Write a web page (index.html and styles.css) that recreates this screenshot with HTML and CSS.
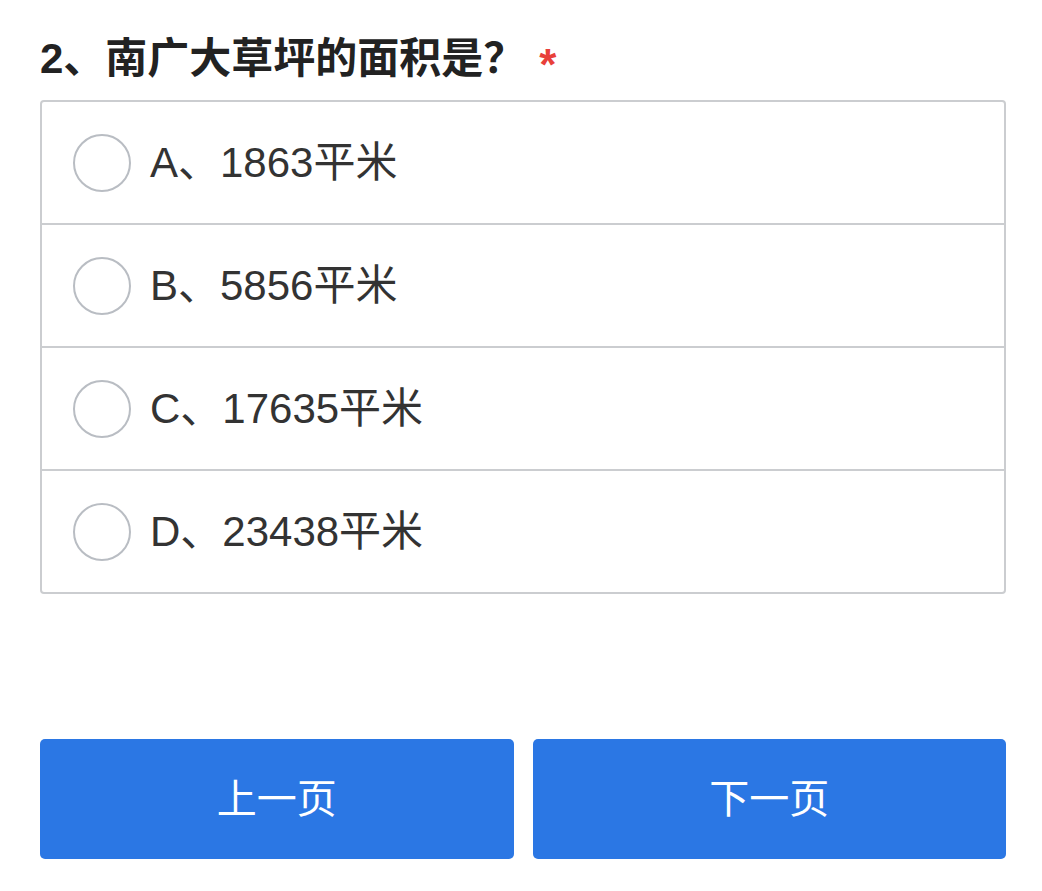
FILE: index.html
```html
<!DOCTYPE html>
<html lang="zh-CN">
  <head>
    <meta charset="UTF-8" />
    <meta name="viewport" content="width=device-width, initial-scale=1.0" />
    <title>问卷</title>
    <link rel="stylesheet" href="styles.css">
  </head>

  <body>
    <div class="page">
      <h2 class="question">2、南广大草坪的面积是？<span class="required">*</span></h2>

      <div class="options">
        <label class="option">
          <input type="radio" name="q2" value="A" />
          <span class="radio"></span>
          <span class="text">A、1863平米</span>
        </label>
        <label class="option">
          <input type="radio" name="q2" value="B" />
          <span class="radio"></span>
          <span class="text">B、5856平米</span>
        </label>
        <label class="option">
          <input type="radio" name="q2" value="C" />
          <span class="radio"></span>
          <span class="text">C、17635平米</span>
        </label>
        <label class="option">
          <input type="radio" name="q2" value="D" />
          <span class="radio"></span>
          <span class="text">D、23438平米</span>
        </label>
      </div>

      <div class="pager">
        <button class="btn" type="button">上一页</button>
        <button class="btn" type="button">下一页</button>
      </div>
    </div>
  </body>
</html>
```

FILE: styles.css
```css
* {
  box-sizing: border-box;
  margin: 0;
  padding: 0;
}

body {
  font-family: "Liberation Sans", "Noto Sans CJK SC", sans-serif;
  background-color: #fff;
  color: #333;
}

.page {
  padding: 29px 36px 0 40px;
}

.question {
  font-size: 42px;
  line-height: 60px;
  height: 60px;
  font-weight: 600;
  color: #222;
}

.required {
  color: #e8403a;
  font-weight: bold;
  font-size: 44px;
  margin-left: 14px;
  vertical-align: -7px;
}

.options {
  margin-top: 11px;
  border: 2px solid #cbcdd0;
  border-radius: 4px;
}

.option {
  display: flex;
  align-items: center;
  height: 123px;
  padding-left: 31px;
  border-top: 2px solid #cbcdd0;
  cursor: pointer;
}

.option:first-child {
  border-top: none;
  height: 121px;
}

.option input {
  display: none;
}

.radio {
  width: 58px;
  height: 58px;
  border: 2px solid #b9bdc3;
  border-radius: 50%;
  flex-shrink: 0;
}

.option input:checked + .radio {
  border: 16px solid #2b77e4;
}

.text {
  margin-left: 19px;
  padding-bottom: 9px;
  font-size: 42px;
  color: #333;
}

.pager {
  display: flex;
  gap: 19px;
  margin-top: 145px;
}

.btn {
  flex: 1;
  height: 120px;
  padding-bottom: 6px;
  border: none;
  border-radius: 5px;
  background-color: #2b77e4;
  color: #fff;
  font-family: inherit;
  font-size: 40px;
  cursor: pointer;
}
```
